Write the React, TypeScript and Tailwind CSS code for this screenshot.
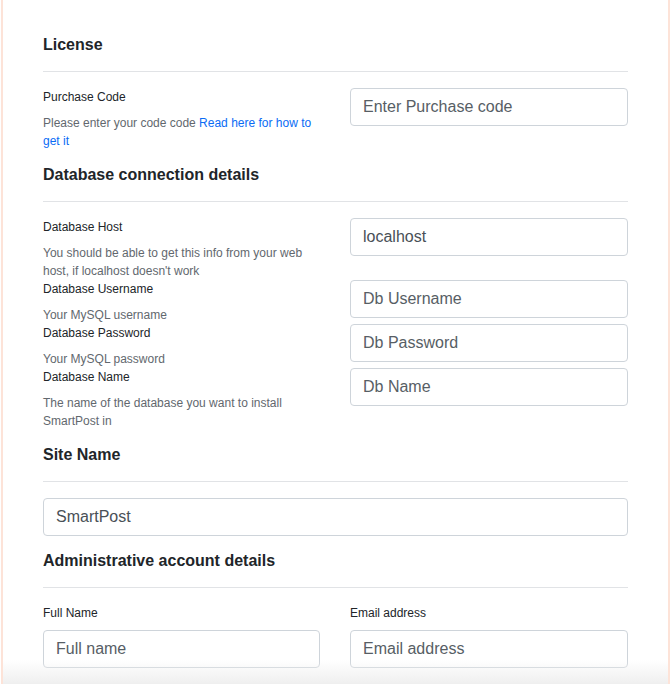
import React from 'react';

type Field = {
    label: string;
    help: React.ReactNode;
    placeholder: string;
    value?: string;
};

const dbFields: Field[] = [
    {
        label: 'Database Host',
        help: "You should be able to get this info from your web host, if localhost doesn't work",
        placeholder: 'Db Host',
        value: 'localhost',
    },
    { label: 'Database Username', help: 'Your MySQL username', placeholder: 'Db Username' },
    { label: 'Database Password', help: 'Your MySQL password', placeholder: 'Db Password' },
    {
        label: 'Database Name',
        help: 'The name of the database you want to install SmartPost in',
        placeholder: 'Db Name',
    },
];

const inputClass =
    'block w-full h-[38px] px-3 border border-[#ced4da] rounded-[4px] bg-white text-[16px] text-[#495057] placeholder:text-[#575e65] outline-none';

const Section: React.FC<{ title: string; first?: boolean; children: React.ReactNode }> = ({ title, first, children }) => (
    <section className={first ? '' : 'mt-[14px]'}>
        <h5 className="pt-px text-[16px] leading-[20px] font-bold text-[#212529]">{title}</h5>
        <hr className="mt-[16px] border-0 border-t border-[#e1e3e6]" />
        <div className="mt-[16px]">{children}</div>
    </section>
);

const FieldRow: React.FC<{ field: Field }> = ({ field }) => (
    <div className="grid grid-cols-[277px_1fr] gap-x-[30px]">
        <div>
            <label className="block text-[12px] leading-[18px] text-[#212529]">{field.label}</label>
            <p className="mt-2 text-[12px] leading-[18px] text-[#62686e]">{field.help}</p>
        </div>
        <div>
            <input className={inputClass} placeholder={field.placeholder} defaultValue={field.value} />
        </div>
    </div>
);

const App: React.FC = () => {
    return (
        <div className="min-h-[684px] bg-white pl-px" style={{ fontFamily: '"Liberation Sans", Arial, sans-serif' }}>
            <div className="relative w-[669px] min-h-[684px] border-x-2 border-[#fde3d8] px-10 pt-[34px] pb-4">
                <Section title="License" first>
                    <FieldRow
                        field={{
                            label: 'Purchase Code',
                            help: (
                                <>
                                    Please enter your code code{' '}
                                    <a href="#" className="text-[#0a6cf5]">Read here for how to get it</a>
                                </>
                            ),
                            placeholder: 'Enter Purchase code',
                        }}
                    />
                </Section>

                <Section title="Database connection details">
                    {dbFields.map(f => (
                        <FieldRow key={f.label} field={f} />
                    ))}
                </Section>

                <Section title="Site Name">
                    <input className={inputClass} placeholder="Site name" defaultValue="SmartPost" />
                </Section>

                <Section title="Administrative account details">
                    <div className="grid grid-cols-[277px_1fr] gap-x-[30px]">
                        <div>
                            <label className="block text-[12px] leading-[18px] text-[#212529]">Full Name</label>
                            <input className={`${inputClass} mt-2`} placeholder="Full name" />
                        </div>
                        <div>
                            <label className="block text-[12px] leading-[18px] text-[#212529]">Email address</label>
                            <input className={`${inputClass} mt-2`} placeholder="Email address" />
                        </div>
                    </div>
                </Section>

                <div className="pointer-events-none absolute inset-x-0 bottom-0 h-[24px] bg-linear-to-b from-white/0 to-[#efefef]" />
            </div>
        </div>
    );
};

export default App;
